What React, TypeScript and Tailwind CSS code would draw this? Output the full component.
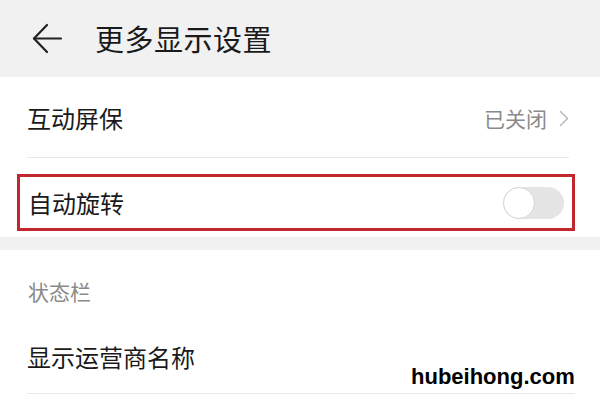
import React from "react";

const cjk = { fontFamily: '"Noto Sans CJK SC", "Noto Sans", sans-serif' };

export default function App() {
  return (
    <div className="relative w-[600px] h-[400px] overflow-hidden bg-white text-[#1a1a1a]" style={cjk}>
      {/* Header */}
      <div className="flex h-[77px] items-center bg-[#f1f1f1] pl-[32px]">
        <svg width="30" height="31" viewBox="0 0 30 31" fill="none" stroke="#222" strokeWidth="2.2" strokeLinecap="round" strokeLinejoin="round">
          <path d="M15 2 L2 15.5 L15 29" />
          <path d="M2 15.5 H29" />
        </svg>
        <div className="ml-[33px] text-[29px] leading-none tracking-[0.5px] text-[#1a1a1a]">更多显示设置</div>
      </div>

      {/* Row: 互动屏保 */}
      <div className="pl-[27px] pr-[31px]">
        <div className="flex h-[81px] items-center justify-between border-b border-[#e8e8e8] pt-[2px]">
          <div className="text-[24px] leading-none">互动屏保</div>
          <div className="flex items-center">
            <span className="text-[21px] leading-none text-[#8a8a8a]">已关闭</span>
            <svg className="ml-[12px]" width="10" height="17" viewBox="0 0 10 17" fill="none" stroke="#bdbdbd" strokeWidth="1.6" strokeLinecap="round" strokeLinejoin="round">
              <path d="M1.5 1.5 L8.5 8.5 L1.5 15.5" />
            </svg>
          </div>
        </div>
      </div>

      {/* Highlighted row: 自动旋转 */}
      <div className="mt-[16px] ml-[17px] mr-[25px] flex h-[57px] items-center justify-between border-[3px] border-[#c1272d] pl-[8px] pr-[8px]">
        <div className="text-[24px] leading-none">自动旋转</div>
        <div className="flex h-[32px] w-[61px] items-center rounded-full bg-[#e5e5e5]">
          <div className="h-[32px] w-[32px] rounded-full border border-[#d6d6d6] bg-white" />
        </div>
      </div>

      {/* Gray band */}
      <div className="mt-[6px] h-[13px] bg-[#f1f1f1]" />

      {/* Section: 状态栏 */}
      <div className="pl-[28px] pt-[31px] text-[21px] leading-none text-[#8a8a8a]">状态栏</div>
      <div className="pl-[27px] pr-[25px]">
        <div className="flex h-[92px] items-center border-b border-[#e8e8e8] pt-[19px] text-[24px] leading-none">
          显示运营商名称
        </div>
      </div>

      {/* Watermark */}
      <div
        className="absolute left-[411px] top-[366px] text-[22px] font-bold leading-none text-black"
        style={{ fontFamily: '"Liberation Sans", Arial, sans-serif' }}
      >
        hubeihong.com
      </div>
    </div>
  );
}
